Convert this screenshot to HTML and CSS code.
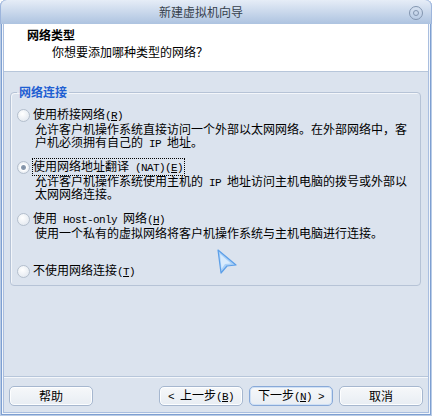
FILE: index.html
```html
<!DOCTYPE html>
<html>
<head>
    <title>新建虚拟机向导</title>
    <link rel="stylesheet" href="styles.css">
</head>
<body>
    <div class="window">
        <div class="titlebar">
            <span class="title">新建虚拟机向导</span>
            <svg class="close" width="16" height="16" viewBox="0 0 16 16">
                <circle cx="8" cy="8" r="6.5" fill="none" stroke="#8396b0" stroke-width="1"/>
                <circle cx="8" cy="8" r="2.5" fill="none" stroke="#8396b0" stroke-width="1"/>
            </svg>
        </div>

        <div class="header">
            <div class="header-title">网络类型</div>
            <div class="header-sub">你想要添加哪种类型的网络？</div>
        </div>

        <div class="content">
            <fieldset class="group">
                <legend>网络连接</legend>

                <div class="option">
                    <label class="option-row"><input type="radio" name="net"><span>使用桥接网络<span class="en">(<u>R</u>)</span></span></label>
                    <div class="desc">
                        <div>允许客户机操作系统直接访问一个外部以太网网络。在外部网络中，客</div>
                        <div>户机必须拥有自己的<span class="en"> IP </span>地址。</div>
                    </div>
                </div>

                <div class="option">
                    <label class="option-row"><input type="radio" name="net" checked><span class="focus">使用网络地址翻译<span class="en"> (NAT)(<u>E</u>)</span></span></label>
                    <div class="desc">
                        <div>允许客户机操作系统使用主机的<span class="en"> IP </span>地址访问主机电脑的拨号或外部以</div>
                        <div>太网网络连接。</div>
                    </div>
                </div>

                <div class="option">
                    <label class="option-row"><input type="radio" name="net"><span>使用<span class="en"> Host-only </span>网络<span class="en">(<u>H</u>)</span></span></label>
                    <div class="desc">
                        <div>使用一个私有的虚拟网络将客户机操作系统与主机电脑进行连接。</div>
                    </div>
                </div>

                <div class="option last">
                    <label class="option-row"><input type="radio" name="net"><span>不使用网络连接<span class="en">(<u>T</u>)</span></span></label>
                </div>
            </fieldset>
        </div>

        <div class="buttons">
            <button class="btn">帮助</button>
            <div class="btn-group">
                <button class="btn"><span class="en">&lt; </span>上一步<span class="en">(<u>B</u>)</span></button>
                <button class="btn default">下一步<span class="en">(<u>N</u>) &gt;</span></button>
                <button class="btn">取消</button>
            </div>
        </div>

        <svg class="cursor" width="24" height="28" viewBox="0 0 24 28">
            <polygon points="3,2 21,17 12,18 6,25" fill="#a9d0f7" stroke="#5c9fe8" stroke-width="1.2" stroke-linejoin="round"/>
            <polygon points="5,6 16,15.5 10,16 6.5,21" fill="#d8ebfd"/>
        </svg>
    </div>
</body>
</html>
```

FILE: styles.css
```css
body {
    margin: 0;
    font-family: "Noto Sans CJK SC", sans-serif;
    font-size: 12px;
    color: #000;
    background: #fff;
}

.window {
    position: relative;
    width: 432px;
    height: 416px;
    box-sizing: border-box;
    padding-bottom: 4px;
    display: flex;
    flex-direction: column;
    background: #dbe3ee;
    border-radius: 6px 6px 0 0;
    box-shadow: inset 0 0 0 1px #b9cce6, inset 0 0 0 2px #7e9fd1, inset 0 0 0 3px #f2f6fb, inset 0 0 0 4px #a9bedf;
}

.titlebar {
    height: 24px;
    flex: none;
    display: flex;
    align-items: center;
    padding: 0 8px 0 4px;
    border-radius: 6px 6px 0 0;
    background: linear-gradient(#e6edf7, #adc3e0);
    box-shadow: inset 1px 0 0 #9db5dc, inset -1px 0 0 #9db5dc;
}

.title {
    flex: 1;
    text-align: center;
    padding-right: 10px;
    color: #36404c;
    line-height: 14px;
}

.close {
    margin-top: 1px;
}

.header {
    height: 48px;
    flex: none;
    margin: 0 4px;
    box-sizing: border-box;
    padding: 4px 0 0 23px;
    background: #fff;
    border-bottom: 1px solid #b7c6da;
    line-height: 14px;
}

.header-title {
    font-weight: bold;
}

.header-sub {
    margin-top: 3px;
    padding-left: 25px;
}

.content {
    flex: 1;
    margin: 0 4px;
    border-bottom: 1px solid #f4f7fb;
    box-shadow: inset 0 -1px 0 #b7c6da;
}

.group {
    margin: 13px 7px 0 6px;
    padding: 9px 0 7px 6px;
    border: 1px solid #b6c3d6;
    border-radius: 4px;
    box-shadow: inset 1px 1px 0 #f3f6fa;
}

.group legend {
    margin-left: 0;
    padding: 0 2px;
    font-weight: bold;
    color: #1f5fd2;
    line-height: 14px;
}

.option {
    margin-bottom: 12px;
}

.option.last {
    margin-bottom: 0;
}

.option-row {
    display: flex;
    align-items: center;
    height: 14px;
    line-height: 14px;
    white-space: nowrap;
}

.option-row input {
    -webkit-appearance: none;
    appearance: none;
    width: 13px;
    height: 13px;
    margin: 0 3px 0 0;
    border: 1px solid #b4bfcd;
    border-radius: 50%;
    box-sizing: border-box;
    background: radial-gradient(circle at 40% 35%, #ffffff, #e7ecf2 70%, #d7dee8);
}

.option-row input:checked {
    background: radial-gradient(circle, #7d8ea3 0, #8c9cb0 2px, #ffffff 3px, #e7ecf2 70%, #d7dee8);
}

.focus {
    outline: 1px dotted #000;
    outline-offset: 0;
    padding-right: 1px;
}

.desc {
    min-height: 26px;
    padding-left: 18px;
    line-height: 13px;
    white-space: nowrap;
}

.desc div {
    height: 13px;
}

.en {
    font-family: "Liberation Mono", "Noto Sans CJK SC", monospace;
    font-size: 11px;
    letter-spacing: -0.6px;
}

.buttons {
    height: 34px;
    flex: none;
    margin: 0 4px;
    box-sizing: border-box;
    padding: 8px 5px 0 5px;
    display: flex;
}

.btn-group {
    margin-left: auto;
    display: flex;
    gap: 6px;
}

.btn {
    width: 84px;
    height: 20px;
    padding: 0;
    font-family: "Noto Sans CJK SC", sans-serif;
    font-size: 12px;
    line-height: 16px;
    color: #000;
    border: 1px solid #a6b7cf;
    border-radius: 5px;
    background: linear-gradient(#f6f8fa, #e8edf3);
    box-shadow: inset 0 0 0 1px #fdfeff;
}

.btn.default {
    border-color: #88a9d8;
    box-shadow: inset 0 0 0 1px #cfe0f5;
}

.cursor {
    position: absolute;
    left: 215px;
    top: 248px;
}
```
